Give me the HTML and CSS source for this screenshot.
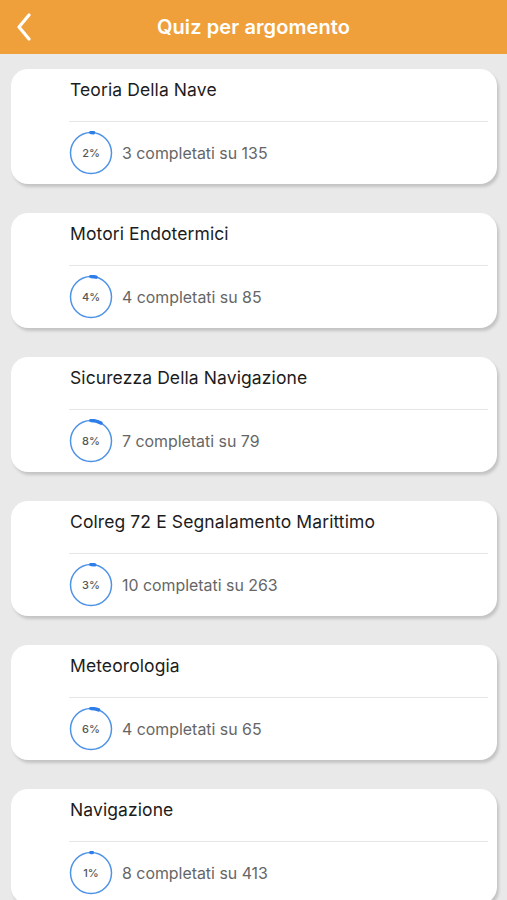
FILE: index.html
```html
<!DOCTYPE html>
<html lang="it">
<head>
<meta charset="utf-8">
<title>Quiz per argomento</title>
<link rel="stylesheet" href="styles.css">
</head>
<body>
<header class="topbar">
  <svg class="back" width="16" height="28" viewBox="0 0 16 28"><path d="M13 2 L3 14 L13 26" fill="none" stroke="#fff" stroke-width="3.2" stroke-linecap="round" stroke-linejoin="round"/></svg>
  <h1 class="title">Quiz per argomento</h1>
</header>
<main class="list">
  <section class="card">
    <div class="card-title">Teoria Della Nave</div>
    <div class="card-foot">
      <div class="ring"><svg viewBox="0 0 44 44"><circle cx="22" cy="22" r="20.5" class="ring-bg"/><circle cx="22" cy="22" r="20.5" class="ring-fg" stroke-dasharray="2.6 200"/></svg><span>2%</span></div>
      <span class="count">3 completati su 135</span>
    </div>
  </section>
  <section class="card">
    <div class="card-title">Motori Endotermici</div>
    <div class="card-foot">
      <div class="ring"><svg viewBox="0 0 44 44"><circle cx="22" cy="22" r="20.5" class="ring-bg"/><circle cx="22" cy="22" r="20.5" class="ring-fg" stroke-dasharray="5.2 200"/></svg><span>4%</span></div>
      <span class="count">4 completati su 85</span>
    </div>
  </section>
  <section class="card">
    <div class="card-title">Sicurezza Della Navigazione</div>
    <div class="card-foot">
      <div class="ring"><svg viewBox="0 0 44 44"><circle cx="22" cy="22" r="20.5" class="ring-bg"/><circle cx="22" cy="22" r="20.5" class="ring-fg" stroke-dasharray="10.3 200"/></svg><span>8%</span></div>
      <span class="count">7 completati su 79</span>
    </div>
  </section>
  <section class="card">
    <div class="card-title">Colreg 72 E Segnalamento Marittimo</div>
    <div class="card-foot">
      <div class="ring"><svg viewBox="0 0 44 44"><circle cx="22" cy="22" r="20.5" class="ring-bg"/><circle cx="22" cy="22" r="20.5" class="ring-fg" stroke-dasharray="3.9 200"/></svg><span>3%</span></div>
      <span class="count">10 completati su 263</span>
    </div>
  </section>
  <section class="card">
    <div class="card-title">Meteorologia</div>
    <div class="card-foot">
      <div class="ring"><svg viewBox="0 0 44 44"><circle cx="22" cy="22" r="20.5" class="ring-bg"/><circle cx="22" cy="22" r="20.5" class="ring-fg" stroke-dasharray="7.7 200"/></svg><span>6%</span></div>
      <span class="count">4 completati su 65</span>
    </div>
  </section>
  <section class="card">
    <div class="card-title">Navigazione</div>
    <div class="card-foot">
      <div class="ring"><svg viewBox="0 0 44 44"><circle cx="22" cy="22" r="20.5" class="ring-bg"/><circle cx="22" cy="22" r="20.5" class="ring-fg" stroke-dasharray="1.3 200"/></svg><span>1%</span></div>
      <span class="count">8 completati su 413</span>
    </div>
  </section>
</main>
</body>
</html>
```

FILE: styles.css
```css
* { box-sizing: border-box; }
html, body { margin: 0; padding: 0; }
body {
  background: #e9e9e9;
  font-family: "Inter", "Roboto", "Liberation Sans", sans-serif;
  width: 507px;
  height: 900px;
  overflow: hidden;
}
.topbar {
  height: 54px;
  background: #f0a03b;
  display: flex;
  align-items: center;
  justify-content: center;
  position: relative;
}
.back {
  position: absolute;
  left: 16px;
  top: 13px;
}
.title {
  margin: 0;
  color: #fff;
  font-size: 20px;
  font-weight: 600;
  letter-spacing: 0.1px;
}
.list {
  display: flex;
  flex-direction: column;
  gap: 29px;
  padding: 15px 10px 0 11px;
}
.card {
  background: #fff;
  border-radius: 17px;
  height: 115px;
  padding-left: 58px;
  padding-right: 9px;
  box-shadow: 2px 3px 3px rgba(0,0,0,0.16);
  display: flex;
  flex-direction: column;
}
.card-title {
  height: 53px;
  border-bottom: 1px solid #e6e6e6;
  padding: 10px 0 0 1px;
  font-size: 17.5px;
  line-height: 22px;
  letter-spacing: 0.1px;
  color: #1c1c1c;
}
.card-foot {
  flex: 1;
  display: flex;
  align-items: center;
  gap: 9px;
}
.ring {
  width: 44px;
  height: 44px;
  position: relative;
  display: flex;
  align-items: center;
  justify-content: center;
}
.ring svg {
  position: absolute;
  inset: 0;
  width: 44px;
  height: 44px;
  transform: rotate(-90deg);
}
.ring-bg { fill: none; stroke: #4f93e6; stroke-width: 1.5; }
.ring-fg { fill: none; stroke: #2f7de8; stroke-width: 3.5; stroke-linecap: round; }
.ring span {
  position: relative;
  font-size: 11px;
  font-weight: 500;
  color: #555;
}
.count {
  font-size: 15.9px;
  color: #666;
}
```
